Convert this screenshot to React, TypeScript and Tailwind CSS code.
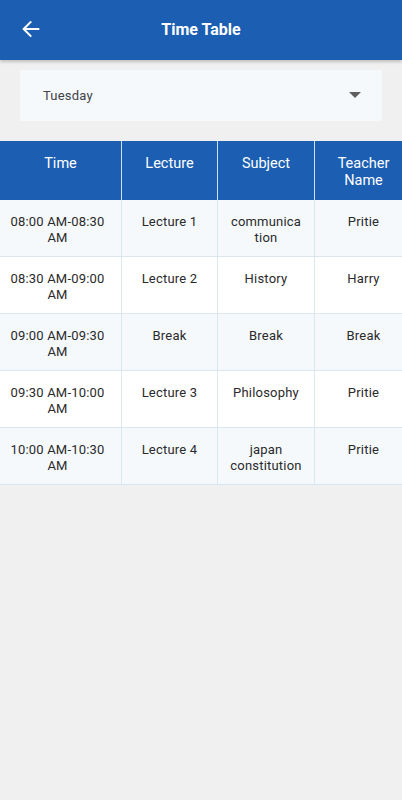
import React from "react";

const rows: string[][][] = [
  [["08:00 AM-08:30 AM"], ["Lecture 1"], ["communica", "tion"], ["Pritie"]],
  [["08:30 AM-09:00 AM"], ["Lecture 2"], ["History"], ["Harry"]],
  [["09:00 AM-09:30 AM"], ["Break"], ["Break"], ["Break"]],
  [["09:30 AM-10:00 AM"], ["Lecture 3"], ["Philosophy"], ["Pritie"]],
  [["10:00 AM-10:30 AM"], ["Lecture 4"], ["japan", "constitution"], ["Pritie"]],
];

export default function App() {
  return (
    <div
      className="w-[402px] h-[800px] bg-[#f0f0f0] overflow-hidden"
      style={{ fontFamily: "Roboto, 'Noto Sans', sans-serif" }}
    >
      <div className="h-[60px] bg-[#1b5eb2] flex items-center relative shadow-[0_2px_3px_rgba(0,0,0,0.2)]">
        <div className="absolute left-[20px] top-[18px]">
          <svg width="22" height="22" viewBox="0 0 24 24" fill="none" stroke="white" strokeWidth="2.2" strokeLinecap="square">
            <path d="M20 12H4.5" />
            <path d="M11.5 4.5L4 12l7.5 7.5" />
          </svg>
        </div>
        <div className="flex-1 text-center text-white font-bold text-[16px]">Time Table</div>
      </div>

      <div className="mx-[20px] mt-[10px] h-[51px] bg-[#f5f9fc] flex items-center justify-between pl-[23px] pr-[21px]">
        <span className="text-[13px] text-[#3f4249] tracking-[0.2px]">Tuesday</span>
        <svg width="12" height="7" viewBox="0 0 12 7">
          <path d="M0 0h12L6 6z" fill="#5f5f5f" />
        </svg>
      </div>

      <div className="mt-[20px] w-[402px] overflow-hidden">
        <div className="grid grid-cols-[122px_96px_97px_97px] w-[412px]">
          {["Time", "Lecture", "Subject", "Teacher Name"].map((h, i) => (
            <div
              key={h}
              className={`h-[59px] bg-[#1b5eb2] text-white text-[14.5px] leading-[17px] text-center pt-[14px] px-[10px] ${i < 3 ? "border-r border-[#cfe0f0]" : ""}`}
            >
              {h}
            </div>
          ))}
          {rows.map((r, ri) =>
            r.map((c, ci) => (
              <div
                key={ri + "-" + ci}
                className={`h-[57px] text-[13px] leading-[16px] text-[#2a2a2a] tracking-[0.2px] text-center pt-[14px] ${ci === 0 ? "pl-[4px] pr-[10px]" : "px-[8px]"} border-b border-[#dbe7f0] ${ci < 3 ? "border-r" : ""} ${ri % 2 === 0 ? "bg-[#f5f9fc]" : "bg-white"}`}
              >
                {c.map((line, li) => (
                  <div key={li}>{line}</div>
                ))}
              </div>
            ))
          )}
        </div>
      </div>
    </div>
  );
}
